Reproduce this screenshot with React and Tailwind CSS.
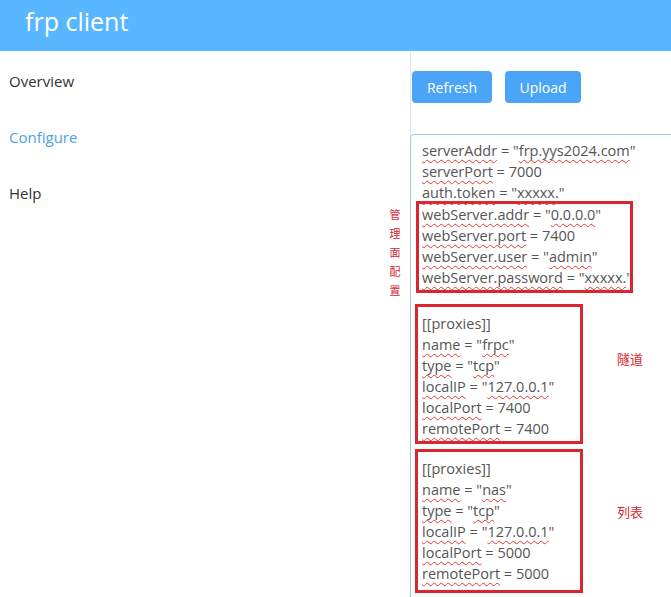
const W = ({ children }) => (
  <span className="underline decoration-wavy decoration-[#e53935] decoration-1 underline-offset-[3px]">{children}</span>
);

const L = ({ k, v, q }) => (
  <div className="h-[21px] leading-[21px] whitespace-nowrap">
    <W>{k}</W> = {q ? <>"<W>{v}</W>"</> : v}
  </div>
);

export default function App() {
  return (
    <div className="w-[671px] h-[597px] overflow-hidden bg-white relative" style={{ fontFamily: '"Open Sans","Noto Sans","Noto Sans CJK SC",sans-serif' }}>
      <div className="h-[51px] bg-[#58b7ff] flex items-center pl-[25px]">
        <span className="text-white text-[25px] leading-none -mt-[8px]">frp client</span>
      </div>
      <div className="flex">
        <div className="w-[411px] shrink-0 border-r border-[#e4e4e4] h-[546px] pl-[9px] text-[15px] text-[#333]">
          <div className="mt-[19px] h-[56px]">Overview</div>
          <div className="h-[56px] text-[#4aa3e6]">Configure</div>
          <div>Help</div>
        </div>
        <div className="flex-1 relative">
          <div className="flex gap-[13px] mt-[20px] ml-[1px]">
            <div className="w-[80px] h-[32px] rounded bg-[#4aa5f8] text-white text-[14px] flex items-center justify-center">Refresh</div>
            <div className="w-[76px] h-[32px] rounded bg-[#4aa5f8] text-white text-[14px] flex items-center justify-center">Upload</div>
          </div>
          <div className="mt-[31px] -ml-[1px] h-[480px] w-[300px] border border-[#9fcbee] rounded-tl pl-[11px] pt-[5px] text-[14.5px] text-[#555]">
            <L k="serverAddr" v="frp.yys2024.com" q />
            <L k="serverPort" v="7000" />
            <L k="auth.token" v="xxxxx." q />
            <div className="border-[3px] border-[#d9262f] w-[217px] -ml-[6px] pl-[3px] pb-[2px] mt-[-2px]">
              <L k="webServer.addr" v="0.0.0.0" q />
              <L k="webServer.port" v="7400" />
              <L k="webServer.user" v="admin" q />
              <L k="webServer.password" v="xxxxx." q />
            </div>
            <div className="border-[3px] border-[#d9262f] w-[168px] -ml-[7px] pl-[4px] pt-[6px] pb-[2px] mt-[11px]">
              <div className="h-[21px] leading-[21px]">[[proxies]]</div>
              <L k="name" v="frpc" q />
              <L k="type" v="tcp" q />
              <L k="localIP" v="127.0.0.1" q />
              <L k="localPort" v="7400" />
              <L k="remotePort" v="7400" />
            </div>
            <div className="border-[3px] border-[#d9262f] w-[168px] -ml-[7px] pl-[4px] pt-[6px] pb-[6px] mt-[5px]">
              <div className="h-[21px] leading-[21px]">[[proxies]]</div>
              <L k="name" v="nas" q />
              <L k="type" v="tcp" q />
              <L k="localIP" v="127.0.0.1" q />
              <L k="localPort" v="5000" />
              <L k="remotePort" v="5000" />
            </div>
          </div>
        </div>
      </div>
      <div className="absolute left-[389px] top-[205px] w-[12px] text-[11px] leading-[19px] text-[#d9262f] text-center">
        <div>管</div><div>理</div><div>面</div><div>配</div><div>置</div>
      </div>
      <div className="absolute left-[617px] top-[350px] text-[13px] text-[#d9262f]">隧道</div>
      <div className="absolute left-[617px] top-[503px] text-[13px] text-[#d9262f]">列表</div>
    </div>
  );
}
